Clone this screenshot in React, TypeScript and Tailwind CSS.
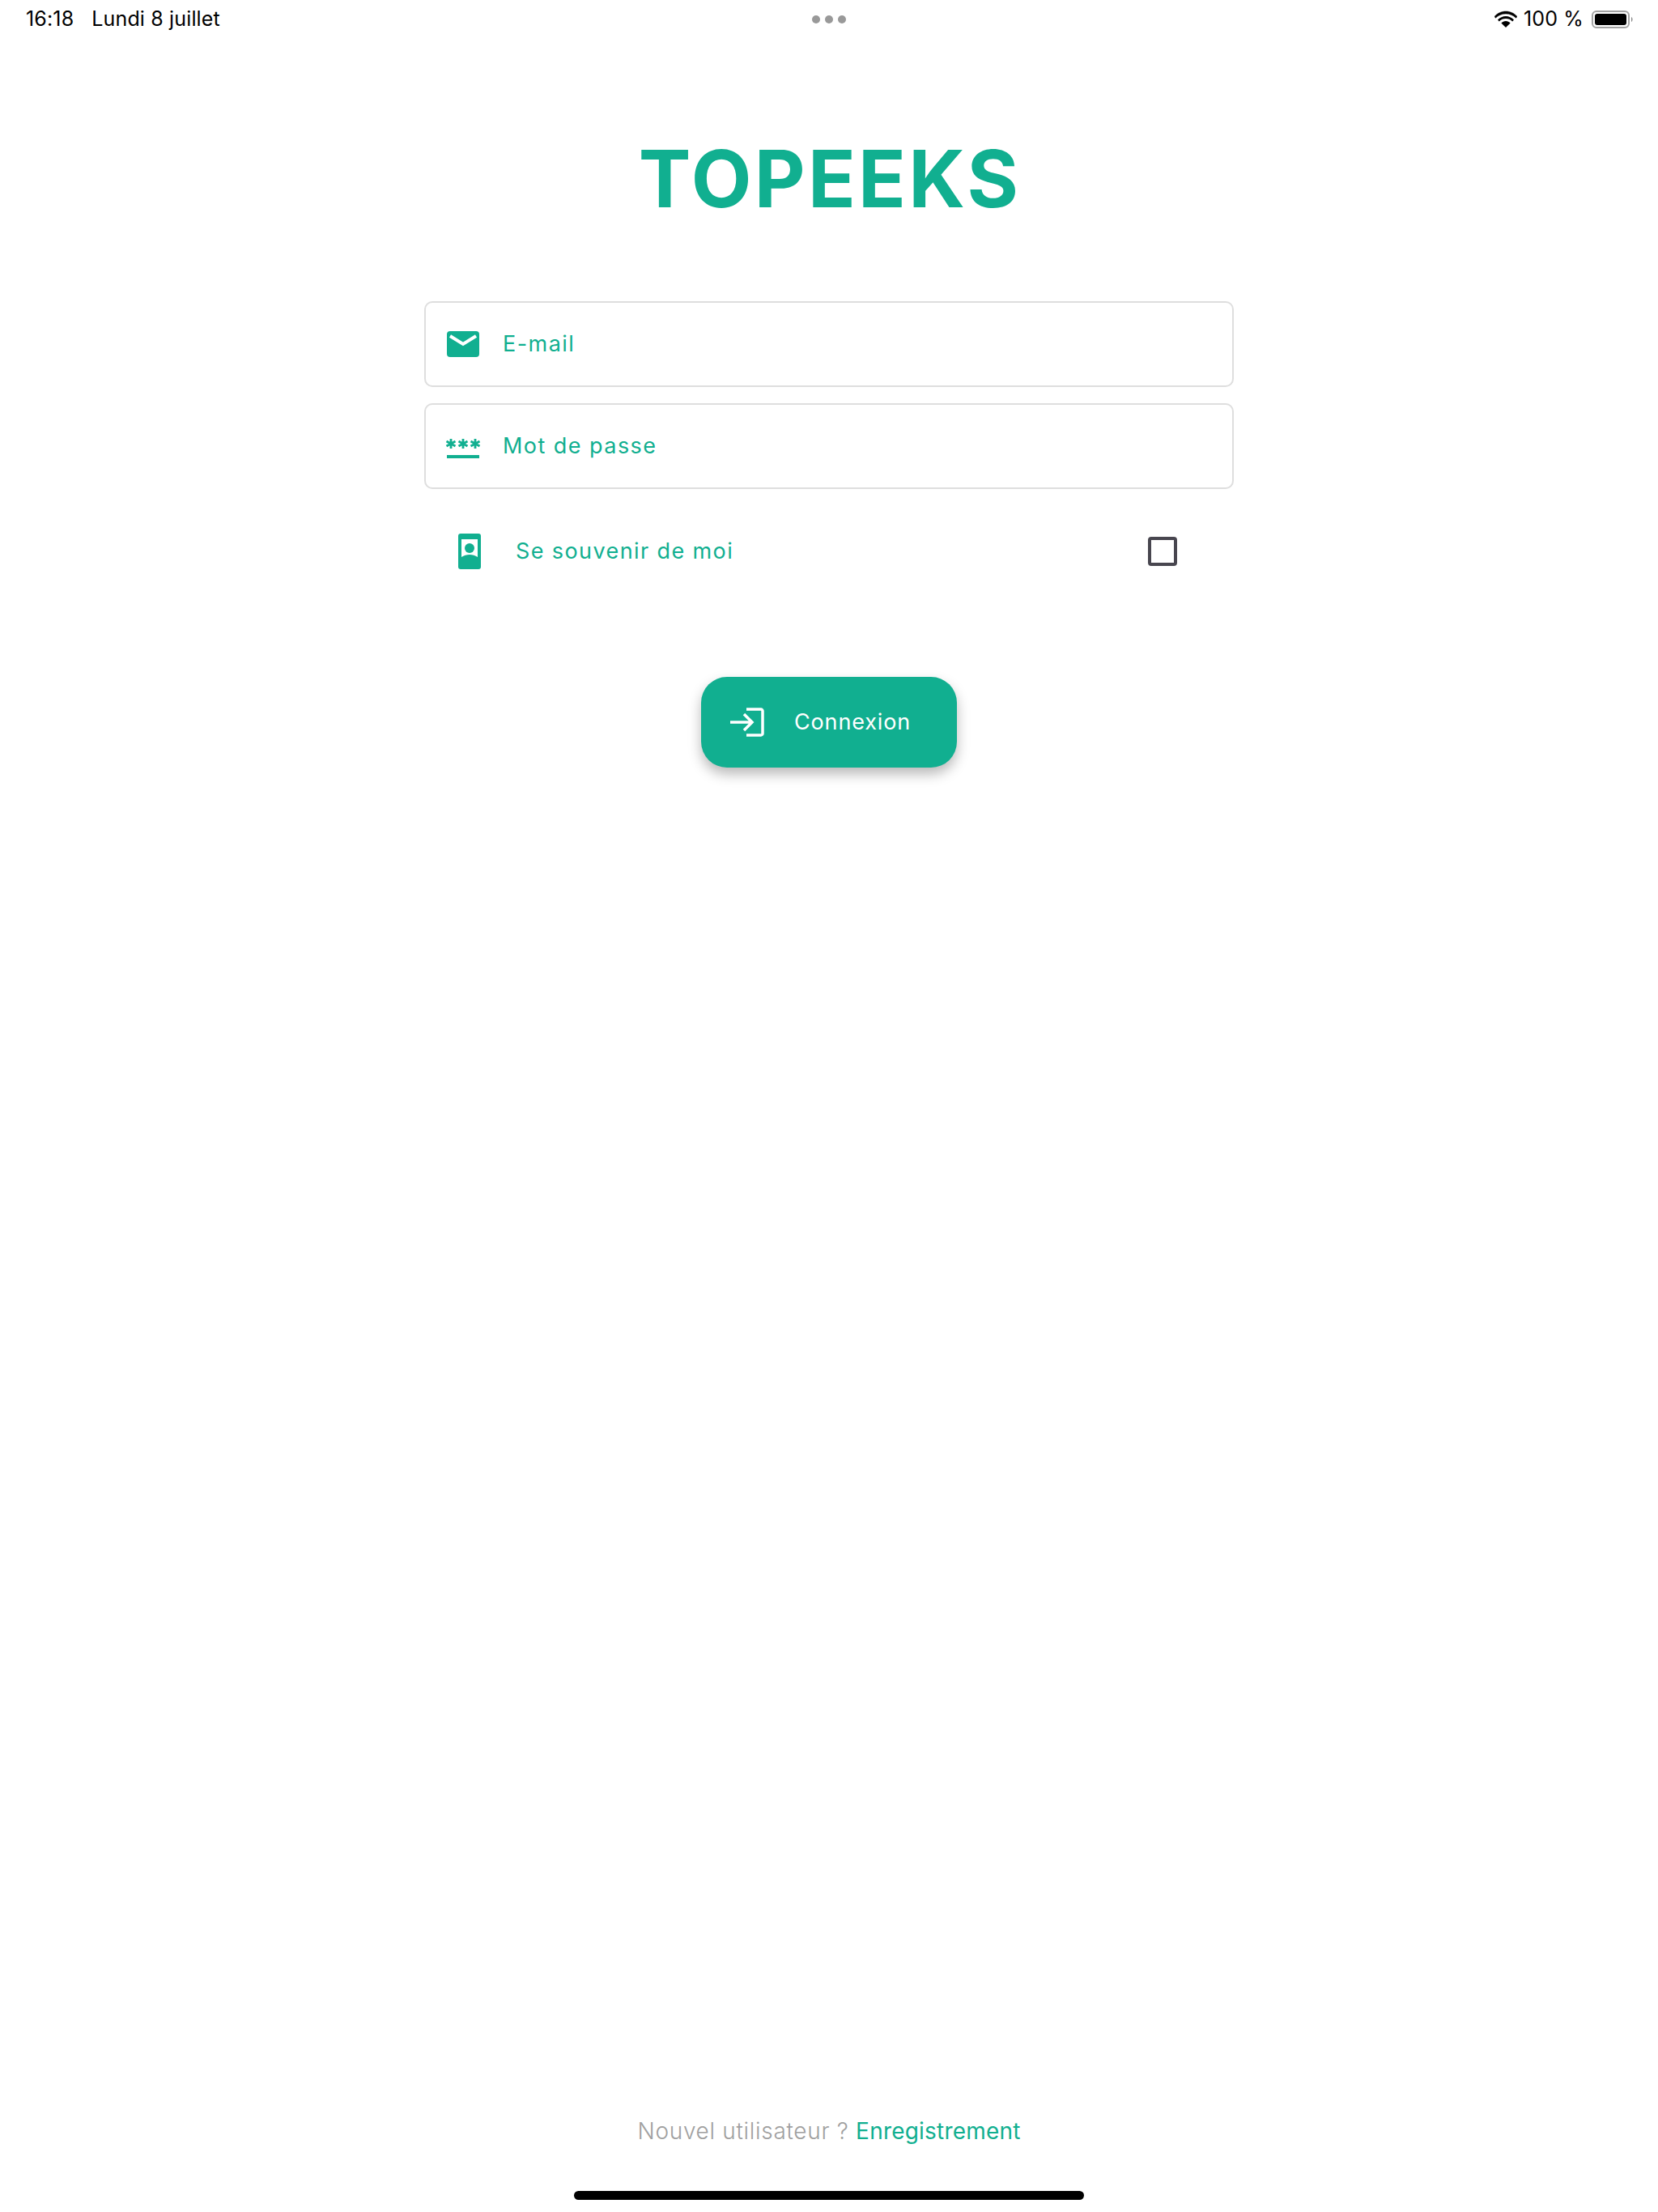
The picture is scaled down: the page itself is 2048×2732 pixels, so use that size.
export default function App() {
  return (
    <div className="w-[2048px] h-[2732px] bg-white flex flex-col font-['Inter',sans-serif] text-[#11af90]">
      <div className="h-[48px] px-[32px] flex items-center justify-between text-black text-[25px] tracking-[0.15px] shrink-0">
        <div className="flex gap-[22px] w-[400px]">
          <span>16:18</span>
          <span>Lundi 8 juillet</span>
        </div>
        <div className="flex gap-[6px]">
          <span className="w-[10px] h-[10px] rounded-full bg-[#999999]" />
          <span className="w-[10px] h-[10px] rounded-full bg-[#999999]" />
          <span className="w-[10px] h-[10px] rounded-full bg-[#999999]" />
        </div>
        <div className="flex w-[400px] justify-end items-center gap-[7px]">
          <svg width="28" height="22" viewBox="0 0 28 22" className="mr-[1px]">
            <path d="M14 4C19 4 23.4 6 26.6 9.2L28 7.4C24.4 3.4 19.4 1 14 1S3.6 3.4 0 7.4L1.4 9.2C4.6 6 9 4 14 4Z" fill="#000" stroke="#000" strokeWidth="0.5" />
            <path d="M14 10C17.2 10 20 11.2 22.2 13.4L24 11.4C21.2 8.8 17.8 7 14 7S6.8 8.8 4 11.4L5.8 13.4C8 11.2 10.8 10 14 10Z" fill="#000" />
            <path d="M14 13C11.8 13 9.8 13.9 8.4 15.4L14 21L19.6 15.4C18.2 13.9 16.2 13 14 13Z" fill="#000" />
          </svg>
          <span>100 %</span>
          <svg width="52" height="24" viewBox="0 0 52 24" className="ml-[3px] mr-[-2px]">
            <rect x="1" y="2" width="45" height="20" rx="5" fill="none" stroke="#a3a3a3" strokeWidth="2" />
            <rect x="4" y="5" width="39" height="14" rx="3" fill="#000" />
            <path d="M49 9C51 10 51 14 49 15Z" fill="#8a8a8a" />
          </svg>
        </div>
      </div>

      <div className="flex flex-col items-center flex-1">
        <h1 className="mt-[113px] pl-[2px] text-[97px] leading-[120px] font-bold tracking-[3.3px]">TOPEEKS</h1>

        <div className="mt-[91px] w-[1000px] flex flex-col gap-[20px]">
          <div className="h-[106px] border-[2px] border-[#dedede] rounded-[10px] flex items-center pl-[26px] gap-[29px]">
            <svg width="40" height="32" viewBox="0 0 40 32" className="shrink-0">
              <rect width="40" height="32" rx="4" fill="#11af90" />
              <path d="M4 6L20 16L36 6" fill="none" stroke="#fff" strokeWidth="4" />
            </svg>
            <span className="text-[27px] font-[370] tracking-[1.45px]">E-mail</span>
          </div>
          <div className="h-[106px] border-[2px] border-[#dedede] rounded-[10px] flex items-center pl-[24px] gap-[27px]">
            <svg width="44" height="30" viewBox="0 0 44 30" className="shrink-0">
              <g stroke="#11af90" strokeWidth="2.8" fill="none">
                <path d="M7 6V18M1.5 9L12.5 15M12.5 9L1.5 15" />
                <path d="M22 6V18M16.5 9L27.5 15M27.5 9L16.5 15" />
                <path d="M37 6V18M31.5 9L42.5 15M42.5 9L31.5 15" />
              </g>
              <rect x="2" y="26" width="40" height="4" fill="#11af90" />
            </svg>
            <span className="text-[27px] font-[370] tracking-[1.45px]">Mot de passe</span>
          </div>
          <div className="h-[106px] flex items-center pl-[42px] pr-[70px] mt-[4px]">
            <svg width="28" height="44" viewBox="0 0 28 44" className="shrink-0">
              <rect width="28" height="44" rx="3" fill="#11af90" />
              <path d="M4 7H24V29C18 25 10 25 4 29Z" fill="#fff" />
              <circle cx="14" cy="18" r="6" fill="#11af90" />
            </svg>
            <span className="ml-[43px] text-[27px] font-[370] tracking-[1.4px] flex-1">Se souvenir de moi</span>
            <span className="w-[36px] h-[36px] border-[4px] border-[#48464f] rounded-[4px]" />
          </div>
        </div>

        <button className="mt-[102px] w-[316px] h-[112px] rounded-[32px] bg-[#11af90] text-white flex items-center pl-[36px] shadow-[0_8px_16px_rgba(0,0,0,0.28)]">
          <svg width="42" height="36" viewBox="0 0 42 36" className="shrink-0">
            <path d="M20 2H38C39 2 40 3 40 4V32C40 33 39 34 38 34H20" fill="none" stroke="#fff" strokeWidth="3.5" />
            <path d="M0 18H27M17 8L27 18L17 28" fill="none" stroke="#fff" strokeWidth="3.5" />
          </svg>
          <span className="ml-[37px] text-[27px] font-[370] tracking-[0.85px]">Connexion</span>
        </button>

        <div className="mt-auto text-[28px] leading-[36px] tracking-[0.2px]">
          <span className="text-[#a0a0a0] font-light tracking-[0.7px]">Nouvel utilisateur ? </span>
          <span className="font-[370]">Enregistrement</span>
        </div>
        <div className="mt-[56px] mb-[15px] w-[630px] h-[11px] rounded-full bg-black shrink-0" />
      </div>
    </div>
  );
}
